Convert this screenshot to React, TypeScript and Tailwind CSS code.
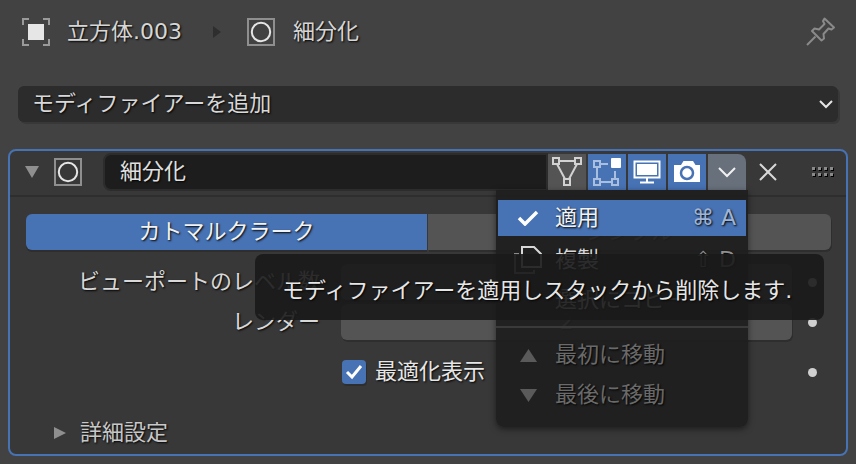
import { ReactNode } from "react"

const fontStack = "font-['DejaVu_Sans','Noto_Sans_CJK_JP',sans-serif]"

function ModifierIcon() {
  return (
    <svg width="28" height="28" viewBox="0 0 28 28" fill="none">
      <rect x="1" y="1" width="26" height="26" stroke="#8f8f8f" strokeWidth="2" />
      <circle cx="14" cy="14" r="9.2" stroke="#e6e6e6" strokeWidth="2" />
    </svg>
  )
}

function ObjectIcon() {
  return (
    <svg width="28" height="28" viewBox="0 0 28 28" fill="none">
      <path d="M1 7V1H7M21 1H27V7M27 21V27H21M7 27H1V21" stroke="#9a9a9a" strokeWidth="2" />
      <rect x="6" y="6" width="16" height="16" fill="#e6e6e6" />
    </svg>
  )
}

function PinIcon() {
  return (
    <svg width="30" height="30" viewBox="0 0 30 30" fill="none" stroke="#8a8a8a" strokeWidth="2">
      <path d="M1 28L9.5 19.5" />
      <path d="M18.5 1.5L28 10.5L25.5 12.5L22.5 11.5L17.5 17L18 21.5L15.5 23.5L6 14L8.5 11.5L13 12.5L18.5 7L17 4Z" strokeLinejoin="round" />
    </svg>
  )
}

function CageIcon() {
  return (
    <svg width="30" height="30" viewBox="0 0 30 30" fill="none" stroke="#d2d2d2" strokeWidth="2">
      <rect x="1" y="1" width="6" height="6" />
      <rect x="23" y="1" width="6" height="6" />
      <rect x="12" y="22" width="6" height="6" />
      <path d="M7 4H23M5 7L13 22M25 7L17 22" />
    </svg>
  )
}

function EditModeIcon() {
  return (
    <svg width="30" height="30" viewBox="0 0 30 30" fill="none" stroke="#a9bfe0" strokeWidth="2">
      <rect x="2" y="4" width="6" height="6" />
      <rect x="2" y="22" width="6" height="6" />
      <rect x="20" y="22" width="6" height="6" />
      <path d="M8 7H16M5 10V22M8 25H20M23 14V22" />
      <rect x="19" y="1" width="10" height="10" rx="1" fill="#ffffff" stroke="none" />
    </svg>
  )
}

function MonitorIcon() {
  return (
    <svg width="28" height="24" viewBox="0 0 28 24" fill="none">
      <rect x="1.5" y="1.5" width="25" height="16" stroke="#ffffff" strokeWidth="2" />
      <rect x="4" y="4" width="20" height="11" fill="#ffffff" />
      <path d="M14 18V22M7 22.5H21" stroke="#ffffff" strokeWidth="2" />
    </svg>
  )
}

function CameraIcon() {
  return (
    <svg width="28" height="24" viewBox="0 0 28 24" fill="none">
      <path d="M1 5H8L10.5 1H20L22.5 5H27V22H1Z" fill="#ffffff" />
      <circle cx="14" cy="13" r="6" stroke="#4772b3" strokeWidth="2.5" />
    </svg>
  )
}

function HeaderButton({ blue, children }: { blue?: boolean; children: ReactNode }) {
  return (
    <div className={`flex h-[36px] w-[38px] items-center justify-center ${blue ? "bg-[#4772b3]" : "bg-[#545454]"}`}>
      {children}
    </div>
  )
}

function PropRow({ label, value }: { label: string; value: string }) {
  return (
    <div className="flex h-[36px] items-center">
      <div className="w-[310px] whitespace-nowrap text-right text-[#d8d8d8]">{label}</div>
      <div className="ml-[21px] flex h-full w-[451px] items-center justify-center rounded-[6px] bg-[#545454] text-[#e0e0e0] shadow-[1px_2px_0_#2e2e2e]">
        {value}
      </div>
      <div className="ml-[16px] h-[9px] w-[9px] rounded-full bg-[#d0d0d0]" />
    </div>
  )
}

function MenuItem({ icon, label, shortcut, dim }: { icon?: ReactNode; label: string; shortcut?: string; dim?: boolean }) {
  return (
    <div className={`flex h-[40px] items-center pl-[18px] pr-[12px] ${dim ? "text-[#6a6a6a]" : "text-[#d8d8d8]"}`}>
      <div className="flex w-[41px] items-center">{icon}</div>
      <span>{label}</span>
      {shortcut && <span className="ml-auto text-[#8f8f8f]">{shortcut}</span>}
    </div>
  )
}

export default function App() {
  return (
    <div className={`relative h-[464px] w-[856px] overflow-hidden bg-[#424242] text-[22px] leading-none [text-shadow:1px_1px_2px_#000000] ${fontStack}`}>
      <div className="flex h-[64px] items-center pl-[22px] pr-[20px] text-[#d6d6d6]">
        <ObjectIcon />
        <span className="ml-[17px]">立方体.003</span>
        <svg className="ml-[31px]" width="8" height="12" viewBox="0 0 8 12">
          <path d="M0 0L8 6L0 12Z" fill="#2e2e2e" />
        </svg>
        <div className="ml-[26px]">
          <ModifierIcon />
        </div>
        <span className="ml-[18px]">細分化</span>
        <div className="ml-auto">
          <PinIcon />
        </div>
      </div>

      <div className="mx-[18px] mt-[22px] flex h-[36px] items-center justify-between rounded-[6px] bg-[#2c2c2c] pl-[14px] pr-[5px] text-[#d8d8d8] shadow-[2px_2px_0_#383838]">
        <span>モディファイアーを追加</span>
        <svg width="14" height="10" viewBox="0 0 14 10" fill="none">
          <path d="M1 2L7 8L13 2" stroke="#e6e6e6" strokeWidth="2" />
        </svg>
      </div>

      <div className="mx-[8px] mt-[27px] h-[307px] rounded-[8px] border-2 border-[#4772b3] bg-[#383838]">
        <div className="flex h-[46px] items-center border-b-2 border-[#2e2e2e] pb-[3px]">
          <svg className="ml-[15px]" width="14" height="12" viewBox="0 0 14 12">
            <path d="M0 0H14L7 12Z" fill="#8f8f8f" />
          </svg>
          <div className="ml-[15px]">
            <ModifierIcon />
          </div>
          <div className="ml-[21px] flex h-[38px] w-[445px] items-center rounded-l-[8px] border-2 border-[#2c2c2c] bg-[#1d1d1d] pl-[15px] text-[#e0e0e0]">
            細分化
          </div>
          <div className="flex gap-[2px]">
            <HeaderButton>
              <CageIcon />
            </HeaderButton>
            <HeaderButton blue>
              <EditModeIcon />
            </HeaderButton>
            <HeaderButton blue>
              <MonitorIcon />
            </HeaderButton>
            <HeaderButton blue>
              <CameraIcon />
            </HeaderButton>
            <div className="flex h-[36px] w-[38px] items-center justify-center rounded-tr-[8px] bg-[#68707c]">
              <svg width="18" height="12" viewBox="0 0 18 12" fill="none">
                <path d="M1 2L9 10L17 2" stroke="#f0f0f0" strokeWidth="2" />
              </svg>
            </div>
          </div>
          <svg className="ml-[13px]" width="18" height="18" viewBox="0 0 18 18" fill="none">
            <path d="M1 1L17 17M17 1L1 17" stroke="#d8d8d8" strokeWidth="2" />
          </svg>
          <div className="ml-[35px] grid grid-cols-4 gap-x-[3px] gap-y-[3px]">
            {[0, 1, 2, 3, 4, 5, 6, 7].map((i) => (
              <div key={i} className="h-[3px] w-[3px] bg-[#8a8a8a] shadow-[1px_1px_0_#000]" />
            ))}
          </div>
        </div>

        <div className="ml-[16px] mr-[15px] mt-[17px] flex h-[36px] gap-[1px]">
          <div className="flex w-[401px] items-center justify-center rounded-l-[6px] bg-[#4772b3] text-[#f2f2f2] shadow-[0_2px_0_#2e2e2e]">
            カトマルクラーク
          </div>
          <div className="flex flex-1 items-center justify-center rounded-r-[6px] bg-[#545454] text-[#d8d8d8] shadow-[1px_2px_0_#2e2e2e]">
            シンプル
          </div>
        </div>

        <div className="mt-[14px] flex flex-col gap-[4px]">
          <PropRow label="ビューポートのレベル数" value="2" />
          <PropRow label="レンダー" value="2" />
        </div>

        <div className="mt-[20px] flex h-[24px] items-center">
          <div className="ml-[332px] flex h-[24px] w-[24px] items-center justify-center rounded-[4px] bg-[#4772b3] shadow-[1px_2px_0_#2e2e2e]">
            <svg width="18" height="16" viewBox="0 0 18 16" fill="none">
              <path d="M2 8L7 13L16 2" stroke="#ffffff" strokeWidth="3" />
            </svg>
          </div>
          <span className="ml-[9px] w-[433px] text-[#e6e6e6]">最適化表示</span>
          <div className="h-[9px] w-[9px] rounded-full bg-[#d0d0d0]" />
        </div>

        <div className="mt-[38px] flex items-center text-[#c8c8c8]">
          <svg className="ml-[44px]" width="12" height="12" viewBox="0 0 12 12">
            <path d="M0 0L12 6L0 12Z" fill="#8f8f8f" />
          </svg>
          <span className="ml-[14px]">詳細設定</span>
        </div>
      </div>

      {/* 드롭다운 메뉴 */}
      <div className="absolute left-[496px] top-[190px] h-[237px] w-[252px] rounded-b-[8px] bg-[#1f1f1f]/95 pt-[10px] shadow-[0_2px_6px_#00000080]">
        <div className="mx-[2px] flex h-[36px] items-center bg-[#4772b3] pl-[19px] pr-[10px] text-[#f2f2f2]">
          <svg width="22" height="16" viewBox="0 0 22 16" fill="none">
            <path d="M2 8L8 14L20 2" stroke="#ffffff" strokeWidth="3.5" />
          </svg>
          <span className="ml-[16px]">適用</span>
          <span className="ml-auto text-[#9fb4d6]">⌘ A</span>
        </div>
        <div className="mt-[4px]">
          <MenuItem
            label="複製"
            shortcut="⇧ D"
            icon={
              <svg width="28" height="28" viewBox="0 0 28 28" fill="none" stroke="#d8d8d8" strokeWidth="2">
                <path d="M8 1H20L27 8V21H8Z" />
                <path d="M5 8H1V27H20V24" stroke="#8a8a8a" />
              </svg>
            }
          />
          <MenuItem label="選択にコピー" />
        </div>
        <div className="mt-[6px] h-[2px] bg-[#3a3a3a]" />
        <div className="mt-[7px]">
          <MenuItem
            dim
            label="最初に移動"
            icon={
              <svg className="ml-[6px]" width="17" height="13" viewBox="0 0 17 13">
                <path d="M8.5 0L17 13H0Z" fill="#5a5a5a" />
              </svg>
            }
          />
          <MenuItem
            dim
            label="最後に移動"
            icon={
              <svg className="ml-[6px]" width="17" height="13" viewBox="0 0 17 13">
                <path d="M0 0H17L8.5 13Z" fill="#5a5a5a" />
              </svg>
            }
          />
        </div>
      </div>

      {/* 툴팁 */}
      <div className="absolute left-[255px] top-[254px] flex h-[66px] w-[569px] items-center rounded-[8px] bg-[#191919]/90 pl-[27px] pt-[8px] text-[#e6e6e6]">
        モディファイアーを適用しスタックから削除します.
      </div>
    </div>
  )
}
